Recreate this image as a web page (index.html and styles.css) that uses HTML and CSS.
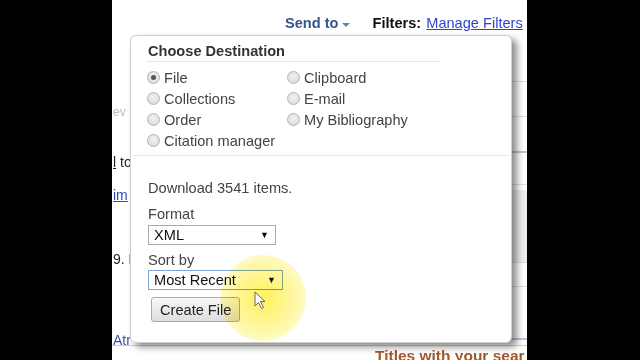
FILE: index.html
```html
<!DOCTYPE html>
<html lang="en">
<head>
    <meta charset="UTF-8">
    <meta name="viewport" content="width=device-width, initial-scale=1.0">
    <title>Send to - Choose Destination</title>
    <link rel="stylesheet" href="styles.css">
</head>
<body>
    <div class="screen">
        <div class="bar bar-left"></div>

        <div class="page">
            <div class="toolbar">
                <span class="send-to">Send to <span class="caret"></span></span>
                <span class="filters"><b>Filters:</b> <a href="#">Manage Filters</a></span>
            </div>

            <div class="content">
                <div class="left-col">
                    <div class="frag pager">ev</div>
                    <div class="frag gap-1"><u>l</u> to</div>
                    <div class="frag gap-2"><a href="#">im</a></div>
                    <div class="frag gap-3">9. E</div>
                    <div class="frag gap-4"><a href="#" class="plain">Atr</a></div>
                </div>
                <div class="right-col">
                    <div class="row r1"></div>
                    <div class="row r2"></div>
                    <div class="row r3 blue"></div>
                    <div class="row r4"></div>
                    <div class="row shaded"></div>
                    <div class="row r5"></div>
                    <div class="row r6 blue"></div>
                </div>
            </div>

            <div class="footer">Titles with your sear</div>

            <!-- Send to menu -->
            <div class="popup">
                <div class="popup-title">Choose Destination</div>

                <div class="dest-grid">
                    <label class="dest"><span class="radio checked"></span>File</label>
                    <label class="dest"><span class="radio"></span>Collections</label>
                    <label class="dest"><span class="radio"></span>Order</label>
                    <label class="dest"><span class="radio"></span>Citation manager</label>
                    <label class="dest"><span class="radio"></span>Clipboard</label>
                    <label class="dest"><span class="radio"></span>E-mail</label>
                    <label class="dest"><span class="radio"></span>My Bibliography</label>
                </div>

                <div class="divider"></div>

                <div class="file-opts">
                    <div class="count">Download 3541 items.</div>
                    <div class="field-label format-label">Format</div>
                    <div class="select select-format">XML <span class="arrow">▼</span></div>
                    <div class="field-label sort-label">Sort by</div>
                    <div class="select select-sort">Most Recent <span class="arrow">▼</span></div>
                    <button class="create-btn">Create File</button>
                </div>
            </div>

            <!-- mouse pointer highlight -->
            <div class="cursor-glow"></div>
            <svg class="cursor" width="13" height="19" viewBox="0 0 13 19">
                <path d="M1 1 L1 15 L4.5 11.5 L7.5 17.5 L9.5 16.5 L6.5 10.5 L11 10.5 Z" fill="#fff" stroke="#666" stroke-width="1" stroke-linejoin="round"/>
            </svg>
        </div>

        <div class="bar bar-right"></div>
    </div>
</body>
</html>
```

FILE: styles.css
```css
* {
    margin: 0;
    padding: 0;
    box-sizing: border-box;
}

body {
    font-family: "Liberation Sans", Arial, sans-serif;
    background: #000;
    width: 640px;
    height: 360px;
    overflow: hidden;
}

.screen {
    display: flex;
    height: 360px;
}

.bar {
    background: #000;
}

.bar-left {
    width: 112px;
}

.bar-right {
    flex: 1;
}

.page {
    position: relative;
    width: 415px;
    height: 360px;
    background: #fff;
    overflow: hidden;
    display: flex;
    flex-direction: column;
}

/* top toolbar */
.toolbar {
    display: flex;
    align-items: center;
    gap: 23px;
    padding: 14px 0 0 173px;
    height: 32px;
    font-size: 14.6px;
    line-height: 18px;
    white-space: nowrap;
}

.send-to {
    color: #34568b;
    font-weight: bold;
    display: flex;
    align-items: center;
    gap: 3px;
}

.caret {
    width: 0;
    height: 0;
    border-left: 4px solid transparent;
    border-right: 4px solid transparent;
    border-top: 4px solid #6a7fa6;
    margin-top: 3px;
}

.filters {
    color: #111;
}

.filters a {
    color: #2e45c8;
    margin-left: 1px;
}

/* background results, mostly hidden by the menu */
.content {
    display: flex;
    height: 313px;
}

.left-col {
    width: 60px;
    padding-left: 1px;
    font-size: 14px;
    line-height: 18px;
    color: #222;
    white-space: nowrap;
}

.frag a {
    color: #2e45c8;
}

.frag a.plain {
    color: #3b56a8;
    text-decoration: none;
}

.pager {
    margin-top: 71px;
    font-size: 12px;
    color: #bbb;
}

.gap-1 { margin-top: 32px; }
.gap-2 { margin-top: 15px; }
.gap-3 { margin-top: 46px; }
.gap-4 { margin-top: 63px; }

.right-col {
    margin-left: auto;
    width: 30px;
    display: flex;
    flex-direction: column;
}

.row {
    border-bottom: 1px solid #ddd;
}

.row.blue {
    border-bottom: 2px solid #b9c6d6;
}

.r1 { height: 50px; }
.r2 { height: 35px; }
.r3 { height: 36px; }
.r4 { height: 32px; }

.shaded {
    height: 73px;
    margin-top: 5px;
    background: #eee;
    border-bottom: 1px solid #ddd;
}

.r5 { height: 24px; }
.r6 { height: 53px; }

.footer {
    border-top: 1px solid #ccc;
    padding: 2px 0 0 263px;
    font-size: 15.5px;
    font-weight: bold;
    line-height: 16px;
    color: #a0582c;
    white-space: nowrap;
}

/* send to menu */
.popup {
    position: absolute;
    left: 18px;
    top: 35px;
    width: 382px;
    height: 308px;
    background: #fff;
    border: 1px solid #cfcfcf;
    border-radius: 6px;
    box-shadow: 5px 4px 7px rgba(0, 0, 0, 0.45);
    font-size: 14.6px;
    line-height: 18px;
    color: #444;
}

.popup-title {
    margin: 6px 0 0 15px;
    width: 295px;
    padding: 0 0 1px 2px;
    border-bottom: 1px solid #e6e6e6;
    font-weight: bold;
    color: #333;
}

.dest-grid {
    display: grid;
    grid-template-columns: 140px 200px;
    grid-template-rows: repeat(4, 21px);
    grid-auto-flow: column;
    margin-top: 5px;
    padding-left: 16px;
}

.dest {
    display: flex;
    align-items: center;
    gap: 4px;
    white-space: nowrap;
}

.radio {
    width: 13px;
    height: 13px;
    border-radius: 50%;
    border: 1px solid #b4b4b4;
    background: radial-gradient(circle at 50% 40%, #f2f2f2 0%, #d6d6d6 100%);
    display: inline-flex;
    align-items: center;
    justify-content: center;
}

.radio.checked::after {
    content: "";
    width: 5px;
    height: 5px;
    border-radius: 50%;
    background: #555;
}

.divider {
    margin: 4px 2px 0;
    border-top: 1px solid #e6e6e6;
}

.file-opts {
    padding-left: 17px;
    display: flex;
    flex-direction: column;
    align-items: flex-start;
}

.count {
    margin-top: 23px;
}

.format-label {
    margin-top: 8px;
}

.sort-label {
    margin-top: 6px;
}

.select {
    height: 20px;
    border: 1px solid #aaa;
    background: #fff;
    color: #111;
    padding-left: 5px;
    display: flex;
    align-items: center;
    justify-content: space-between;
    line-height: 18px;
}

.select .arrow {
    font-size: 9px;
    margin-right: 6px;
    color: #111;
}

.select-format {
    width: 128px;
    margin-top: 2px;
}

.select-sort {
    width: 135px;
    margin-top: 1px;
    border-color: #7fa6d6;
}

.create-btn {
    margin: 7px 0 0 3px;
    height: 25px;
    padding: 0 8px;
    font-family: inherit;
    font-size: 14.6px;
    color: #222;
    background: linear-gradient(#f7f7f7, #dedede);
    border: 1px solid #a9a9a9;
    border-radius: 3px;
}

.cursor-glow {
    position: absolute;
    left: 108px;
    top: 255px;
    width: 86px;
    height: 86px;
    border-radius: 50%;
    background: radial-gradient(circle, rgba(255, 238, 50, 0.8) 0%, rgba(255, 240, 80, 0.5) 55%, rgba(255, 245, 120, 0) 100%);
    mix-blend-mode: multiply;
    pointer-events: none;
}

.cursor {
    position: absolute;
    left: 142px;
    top: 291px;
}
```
